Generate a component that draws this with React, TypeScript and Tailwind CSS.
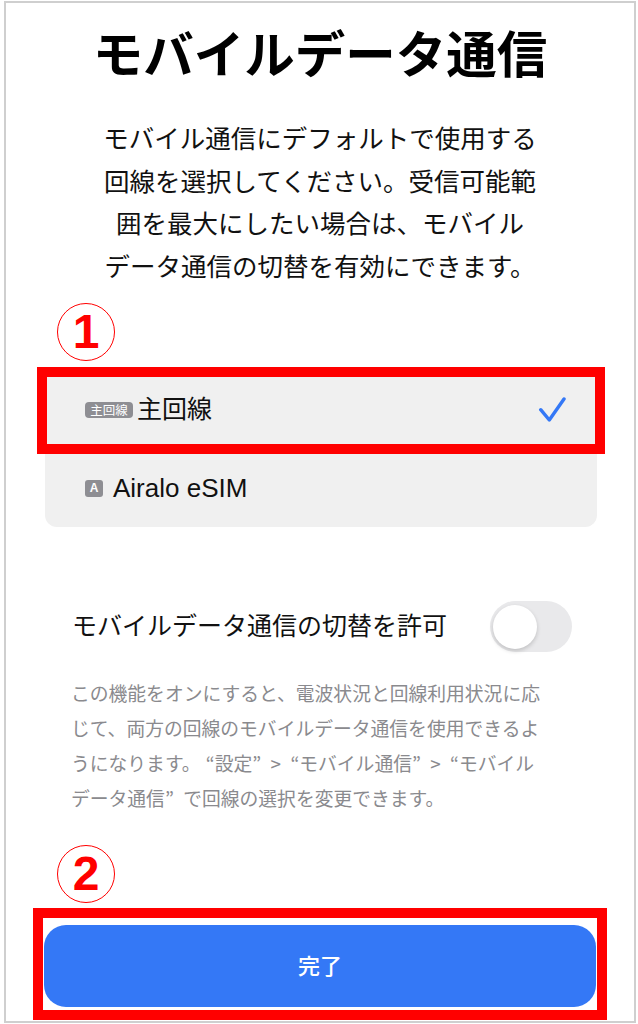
import React from 'react';

// Mobile data line selection screen (iOS style) with red annotation boxes
const jp = '[font-family:"Liberation_Sans","Noto_Sans_CJK_JP",sans-serif]';

const Circled = ({ n }: { n: string }) => (
  <div className="ml-[51px] w-[58px] h-[58px] rounded-full border-[1.5px] border-[#ff0000] flex items-center justify-center">
    <span className="text-[#ff0000] text-[48px] leading-none font-bold [font-family:'Liberation_Sans',sans-serif]">{n}</span>
  </div>
);

const Check = () => (
  <svg width="28" height="28" viewBox="0 0 28 28" fill="none">
    <path d="M2.7 13.7 L11.3 24 L26 3" stroke="#3478f6" strokeWidth="3.4" strokeLinecap="round" strokeLinejoin="round" />
  </svg>
);

// quoted term with wide Japanese style quotes
const Q = ({ children, open = true, close = true }: { children: React.ReactNode; open?: boolean; close?: boolean }) => (
  <>
    {open && <span className="inline-block w-[0.75em] text-right">“</span>}
    {children}
    {close && <span className="inline-block w-[0.75em] text-left">”</span>}
  </>
);

export default function App() {
  return (
    <div className={`relative w-[638px] h-[1024px] bg-white pl-[4px] pt-[1px] ${jp}`}>
      <div className="w-[632px] h-[1022px] border-2 border-[#cfcfcf] flex flex-col">
        {/* Title */}
        <h1 className="mt-[23px] text-center text-[50.5px] leading-[60px] font-bold text-black">
          モバイルデータ通信
        </h1>

        {/* Intro */}
        <p className="mt-[32px] text-center text-[25.5px] leading-[42.5px] text-[#111]">
          モバイル通信にデフォルトで使用する<br />
          回線を選択してください。受信可能範<br />
          囲を最大にしたい場合は、モバイル<br />
          データ通信の切替を有効にできます。
        </p>

        <div className="mt-[15px]">
          <Circled n="1" />
        </div>

        {/* Line list */}
        <div className="mt-[10px] ml-[39px] w-[552px] rounded-[12px] bg-[#f0f0f0]">
          <div className="h-[78px] flex items-center pl-[40px] pr-[31px]">
            <span className="w-[48px] h-[16px] rounded-[4px] bg-[#8e8e93] text-white text-[12.5px] leading-[16px] text-center [font-family:'Noto_Sans_CJK_JP',sans-serif]">
              主回線
            </span>
            <span className="ml-[4px] text-[25px] text-[#111]">主回線</span>
            <span className="ml-auto"><Check /></span>
          </div>
          <div className="h-[78px] flex items-center pl-[40px]">
            <span className="w-[18px] h-[17px] rounded-[3px] bg-[#8e8e93] text-white text-[12px] leading-[17px] font-bold text-center">
              A
            </span>
            <span className="ml-[10px] text-[26px] text-[#111]">Airalo eSIM</span>
          </div>
        </div>

        {/* Switch row */}
        <div className="mt-[74px] h-[51px] flex items-center justify-between pl-[66px] pr-[62px]">
          <span className="text-[25px] text-[#111]">モバイルデータ通信の切替を許可</span>
          <div className="w-[82px] h-[51px] rounded-full bg-[#e9e9eb] flex items-center pl-[3px]">
            <div className="w-[44px] h-[44px] rounded-full bg-white shadow-[0_2px_4px_rgba(0,0,0,0.18)]" />
          </div>
        </div>

        <p className="mt-[23px] pl-[65px] text-[18.8px] leading-[35px] text-[#8a8a8e] [font-family:'Noto_Sans_CJK_JP',sans-serif]">
          この機能をオンにすると、電波状況と回線利用状況に応<br />
          じて、両方の回線のモバイルデータ通信を使用できるよ<br />
          うになります。<Q>設定</Q> &gt; <Q>モバイル通信</Q> &gt; <Q close={false}>モバイル</Q><br />
          データ通信<span className="inline-block w-[0.75em] text-left">”</span> で回線の選択を変更できます。
        </p>

        <div className="mt-[30px]">
          <Circled n="2" />
        </div>

        <button className="mt-[22px] ml-[38px] w-[552px] h-[82px] rounded-[22px] bg-[#3478f6] text-white text-[22px] font-medium">
          完了
        </button>
      </div>

      {/* Annotation boxes */}
      <div className="absolute left-[37px] top-[367px] w-[568px] h-[87px] border-[10px] border-[#ff0000]" />
      <div className="absolute left-[33px] top-[908px] w-[574px] h-[112px] border-[10px] border-[#ff0000]" />
    </div>
  );
}
